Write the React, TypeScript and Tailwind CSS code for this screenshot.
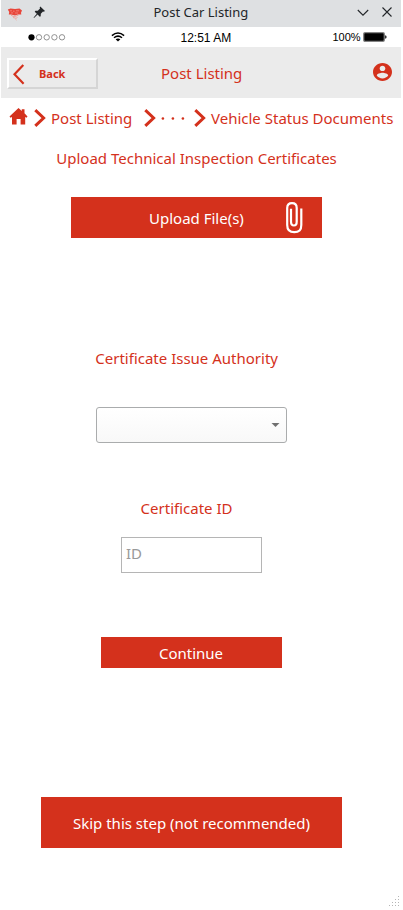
const RED = '#d4311c';

function CarLogo() {
  return (
    <svg className="mt-[6px] ml-[6px] h-[15px] w-[16px] shrink-0" viewBox="0 0 16 15">
      <path d="M.8 3.400 3.500 2.500 8 3 12.500 2.500 15 4.500 14 6.800 14.300 8.500 11 8.500 8 9.500 4 8.500 1.800 8.600 2.200 6z" fill="#e8463a" />
      <path d="M3 4.800h2M6 5.200h1.500M9 4.800h3M4 6.900h2M8 7h3" stroke="#f3948c" strokeWidth=".7" />
      <path d="M4 9.200 7 10.800 11.500 9.200M6 11.500 9 12.300 10.500 11.500M8.500 13.300l1 .8" stroke="#eda09a" strokeWidth=".9" fill="none" />
    </svg>
  );
}

function TitleBar() {
  return (
    <div className="flex h-[27px] bg-[#dee0e2] text-[#232629]">
      <CarLogo />
      <svg className="mt-[6px] ml-[10px] h-[13px] w-[13px] shrink-0" viewBox="0 0 13 13">
        <path d="M7.300.400 12 5 10.800 5.700 10 5.500 7.800 7.800 7.700 10.200 6.800 10.800 4.600 8.600 1 12 .600 11.600 3.800 7.800 1.700 5.700 2.400 4.800 4.800 4.700 7 2.400 6.700 1.500z" fill="currentColor" />
      </svg>
      <div className="-mt-px ml-[107.500px] w-[95.500px] shrink-0 text-[13px] leading-[27px] whitespace-nowrap">Post Car Listing</div>
      <svg className="mt-[8px] ml-[108px] h-[10px] w-[12px] shrink-0" viewBox="0 0 12 10" fill="none" stroke="currentColor" strokeWidth="1.100">
        <path d="M.800 2 6 7.200 11.200 2" />
      </svg>
      <svg className="mt-[7px] ml-[13px] h-[10px] w-[10px] shrink-0" viewBox="0 0 10 10" fill="none" stroke="currentColor" strokeWidth="1.100">
        <path d="M.500.500 9.500 9.500M9.500.500.500 9.500" />
      </svg>
    </div>
  );
}

function StatusBar() {
  return (
    <div className="flex h-[20px] bg-white font-['Liberation_Sans',sans-serif] text-black">
      <svg className="mt-[6px] ml-[27px] h-[8px] w-[38px] shrink-0" viewBox="0 0 38 8" fill="none" stroke="#777" strokeWidth=".8">
        <circle cx="3.500" cy="4.300" r="3.100" fill="#000" stroke="none" />
        <circle cx="11" cy="4.300" r="2.700" />
        <circle cx="18.700" cy="4.300" r="2.700" />
        <circle cx="26.400" cy="4.300" r="2.700" />
        <circle cx="34" cy="4.300" r="2.700" />
      </svg>
      <svg className="mt-[5px] ml-[45px] h-[10px] w-[14px] shrink-0" viewBox="0 0 14 10" fill="none" stroke="#000" strokeWidth="1.500">
        <path d="M.900 3.600Q7-1.500 13.100 3.600M3 5.800Q7 2.400 11 5.800" />
        <path d="M4.600 7.300Q7 5.600 9.400 7.300L7 9.600z" fill="#000" stroke="none" />
      </svg>
      <div className="mt-px ml-[55.500px] w-[52px] text-[12px] leading-[20px] whitespace-nowrap">12:51 AM</div>
      <div className="ml-[100px] w-[29.500px] text-[11px] leading-[20px] whitespace-nowrap">100%</div>
      <svg className="mt-[5px] ml-[1px] h-[10px] w-[24px] shrink-0" viewBox="0 0 24 10">
        <rect x=".7" y=".7" width="20.600" height="8.600" rx="1.300" fill="#000" stroke="#858585" strokeWidth="1.300" />
        <path d="M21.800 3.200Q23.700 3.500 23.700 5T21.800 6.800z" fill="#333" />
      </svg>
    </div>
  );
}

function Header() {
  return (
    <div className="flex h-[51px] bg-[#ebebeb] text-[#d4311c]">
      <button className="mt-[11px] ml-[6px] flex h-[31px] w-[91px] shrink-0 border-2 border-t-white border-r-[#d5d5d5] border-b-[#d5d5d5] border-l-white">
        <svg className="mt-[4px] ml-[4px] h-[21px] w-[12px]" viewBox="0 0 12 21" fill="none" stroke={RED} strokeWidth="2.200">
          <path d="M10.300 1 1.500 10.300 10.600 19.800" />
        </svg>
        <span className="ml-[14px] text-[11px] leading-[27px] font-bold">Back</span>
      </button>
      <div className="mt-px ml-[63px] w-[82px] text-[15px] leading-[51px] whitespace-nowrap">Post Listing</div>
      <svg className="mt-[16px] ml-[130px] h-[18px] w-[19px] shrink-0" viewBox="2 2 20 20" preserveAspectRatio="none">
        <path fill={RED} d="M12 2C6.480 2 2 6.480 2 12s4.480 10 10 10 10-4.480 10-10S17.520 2 12 2zm0 3c1.660 0 3 1.340 3 3s-1.340 3-3 3-3-1.340-3-3 1.340-3 3-3zm0 14.200c-2.500 0-4.710-1.280-6-3.220.030-1.990 4-3.080 6-3.080 1.990 0 5.970 1.090 6 3.080-1.290 1.940-3.500 3.220-6 3.220z" />
      </svg>
    </div>
  );
}

function Separator({ className }: { className: string }) {
  return (
    <svg className={`mt-[11px] h-[18px] w-[12px] shrink-0 ${className}`} viewBox="0 0 12 18" fill="none" stroke={RED} strokeWidth="3">
      <path d="M1.300 1.200 9.600 9 1.300 16.800" />
    </svg>
  );
}

function Breadcrumbs() {
  return (
    <div className="flex h-[40px] text-[15px] leading-[40px] whitespace-nowrap text-[#d4311c]">
      <svg className="mt-[10px] ml-[8px] h-[17px] w-[19px] shrink-0" viewBox="0 0 19 17" fill={RED}>
        <path d="M9.500 0 12.800 3V1.300h2.700v4L18.500 8.600 17.500 9.700 16.200 8.900V16.600H11.600V11H7.600v5.600H3V8.900L1.500 9.700.500 8.600z" />
      </svg>
      <Separator className="ml-[6px]" />
      <span className="ml-[5px] w-[82px] shrink-0">Post Listing</span>
      <Separator className="ml-[11px]" />
      <svg className="mt-[19px] ml-[5px] h-[3px] w-[24px] shrink-0" viewBox="0 0 24 3" fill={RED}>
        <circle cx="1.900" cy="1.500" r="1.300" />
        <circle cx="11.900" cy="1.500" r="1.300" />
        <circle cx="21.900" cy="1.500" r="1.300" />
      </svg>
      <Separator className="ml-[9px]" />
      <span className="ml-[5px]">Vehicle Status Documents</span>
    </div>
  );
}

export default function App() {
  return (
    <div className="h-[910px] w-[403px] overflow-hidden bg-white pl-px font-['Noto_Sans',sans-serif]">
      <div className="w-[400px]">
        <TitleBar />
        <StatusBar />
        <Header />
        <Breadcrumbs />
      </div>
      <main className="flex flex-col items-start text-[15px] whitespace-nowrap text-[#d4311c]">
        <h1 className="mt-[10px] ml-[55.300px] leading-[21px]">Upload Technical Inspection Certificates</h1>
        <button className="mt-[28px] ml-[70px] flex h-[41px] w-[251px] bg-[#d4311c] text-white">
          <span className="ml-[78px] w-[95px] text-left leading-[43px]">Upload File(s)</span>
          <svg className="mt-[5px] ml-[41px] h-[32px] w-[18px]" viewBox="0 0 18 32" fill="none" stroke="#fff" strokeWidth="2.200">
            <path d="M6 6.800V19.500Q6 23.500 8.900 23.500T11.700 19.500V6Q11.700 1.200 7 1.200T2.200 6V23Q2.200 30.200 9.300 30.200T16.300 23V6.500" />
          </svg>
        </button>
        <label className="mt-[110px] ml-[94.300px] leading-[21px]">Certificate Issue Authority</label>
        <div className="mt-[38px] ml-[95px] flex h-[36px] w-[191px] justify-end rounded-[3px] border border-[#aaacad] bg-linear-to-b from-white to-[#f8f8f8]">
          <svg className="mt-[15px] mr-[6px] h-[4px] w-[9px]" viewBox="0 0 9 4"><path d="M.5 0h8l-4 4z" fill="#707070" /></svg>
        </div>
        <label className="mt-[55px] ml-[139.600px] leading-[21px]">Certificate ID</label>
        <input className="mt-[18px] ml-[120px] h-[36px] w-[141px] border border-[#b5b5b5] pb-[5px] pl-[4px] leading-[21px] outline-none placeholder:text-[#999]" placeholder="ID" />
        <button className="mt-[64px] ml-[100px] h-[31px] w-[181px] bg-[#d4311c] pt-[2px] pr-px text-white">Continue</button>
        <button className="mt-[129px] ml-[40px] h-[51px] w-[301px] bg-[#d4311c] pt-[2px] text-white">Skip this step (not recommended)</button>
        <svg className="mt-[48px] ml-[388px] h-[11px] w-[10px]" viewBox="0 0 10 11" fill="#b5b5b5">
          <path d="M9 0h1v1H9zM6 3h1v1H6zM9 3h1v1H9zM3 6h1v1H3zM6 6h1v1H6zM9 6h1v1H9zM0 9h1v1H0zM3 9h1v1H3zM6 9h1v1H6zM9 9h1v1H9z" />
        </svg>
      </main>
    </div>
  );
}
